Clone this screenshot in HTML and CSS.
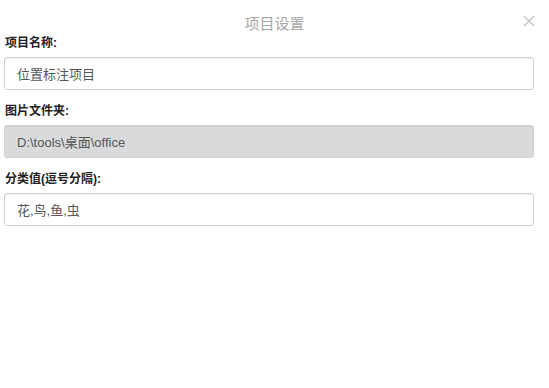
FILE: index.html
```html
<!DOCTYPE html>
<html lang="zh-CN">
<head>
<meta charset="utf-8">
<title>项目设置</title>
<link rel="stylesheet" href="styles.css">
</head>
<body>
<div class="dialog">
  <div class="header">
    <span class="title">项目设置</span>
    <span class="close"><svg width="12" height="12" viewBox="0 0 12 12"><path d="M1 1L11 11M11 1L1 11" stroke="#bdbdbd" stroke-width="1.1" fill="none"/></svg></span>
  </div>
  <div class="field">
    <div class="label">项目名称:</div>
    <div class="input">位置标注项目</div>
  </div>
  <div class="field">
    <div class="label">图片文件夹:</div>
    <div class="input disabled">D:\tools\桌面\office</div>
  </div>
  <div class="field">
    <div class="label">分类值(逗号分隔):</div>
    <div class="input">花,鸟,鱼,虫</div>
  </div>
</div>
</body>
</html>
```
FILE: styles.css
```css
html, body {
  margin: 0;
  padding: 0;
  background: #fff;
}
body {
  font-family: "Liberation Sans", "Noto Sans CJK SC", sans-serif;
  font-size: 12px;
  color: #333;
}
.dialog {
  padding: 0 15px 0 4px;
}
.header {
  position: relative;
  height: 35px;
  display: flex;
  align-items: center;
  justify-content: center;
  margin-left: -4px;
  margin-right: -15px;
}
.title {
  font-size: 15px;
  color: #a8a8a8;
  padding-top: 9px;
}
.close {
  position: absolute;
  right: 14px;
  top: 15px;
  line-height: 0;
}
.field {
  margin-bottom: 13px;
}
.field + .field .label {
  margin-top: 1px;
}
.label {
  font-weight: bold;
  color: #222;
  line-height: 16px;
  padding-left: 1px;
  margin-bottom: 6px;
}
.input {
  height: 31px;
  border: 1px solid #cfcfcf;
  border-radius: 3px;
  box-shadow: inset 0 1px 1px rgba(0,0,0,0.06);
  display: flex;
  align-items: center;
  padding-left: 12px;
  font-size: 13px;
  color: #555;
}
.input.disabled {
  background: #d9dadc;
  border-color: #d2d2d2;
}
```
